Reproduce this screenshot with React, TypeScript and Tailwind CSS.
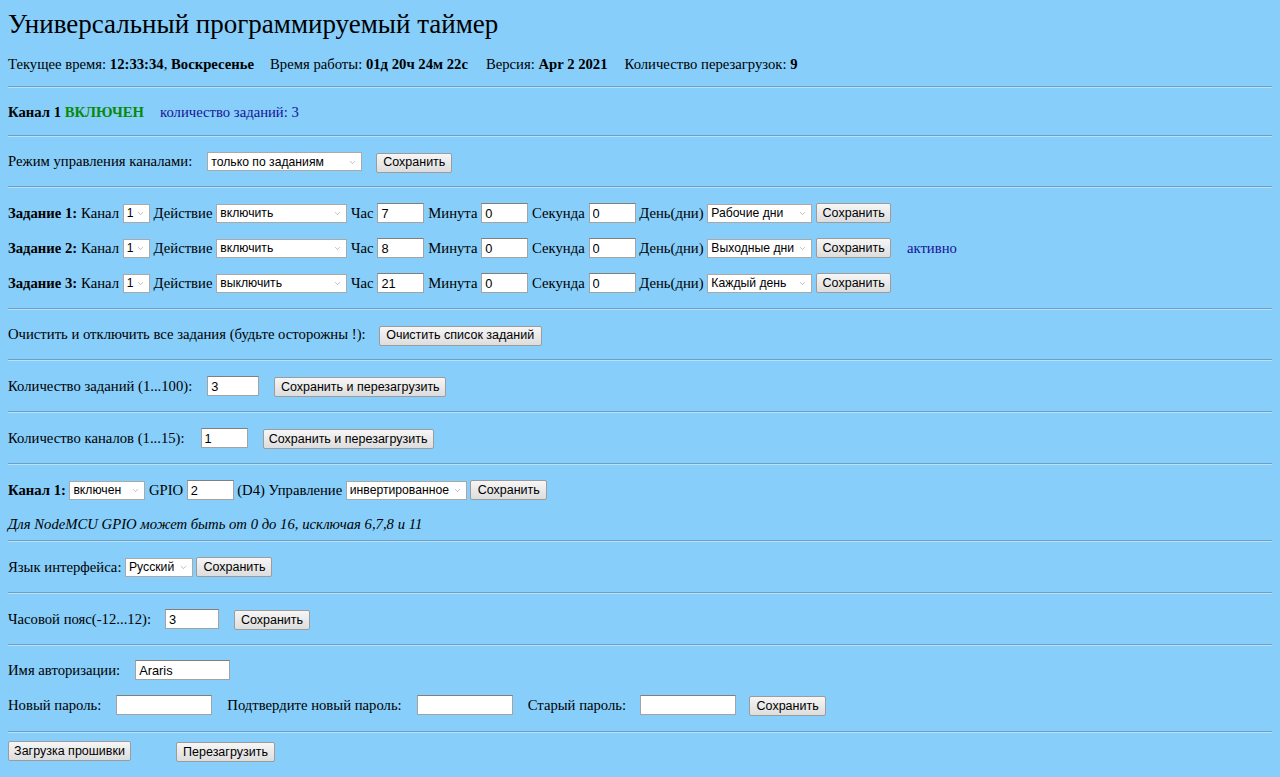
import { ChevronDown } from "lucide-react";

const serif = { fontFamily: '"Liberation Serif", "Times New Roman", serif' };

function Hr() {
  return <div className="h-[2px] border-t border-b border-t-[#6c9fc1] border-b-[#b8e1fb]" />;
}

function Btn({ w, children }: { w: number; children: string }) {
  return (
    <button
      style={{ width: w }}
      className="h-[20px] shrink-0 rounded-[2px] border border-[#9c9c9c] bg-gradient-to-b from-[#f6f6f6] to-[#dddddd] text-[12.5px] leading-none text-black font-['Liberation_Sans',Arial,sans-serif]"
    >
      {children}
    </button>
  );
}

function Inp({ w, value }: { w: number; value: string }) {
  return (
    <input
      readOnly
      value={value}
      style={{ width: w }}
      className="h-[20px] shrink-0 border border-[#a3a3a3] border-t-[#7f7f7f] bg-white pl-[3px] text-[12.8px] text-black outline-none font-['Liberation_Sans',Arial,sans-serif]"
    />
  );
}

// dropdown drawn as a box so the text sits where the old Windows select put it
function Sel({ w, value }: { w: number; value: string }) {
  return (
    <div
      role="combobox"
      style={{ width: w }}
      className="flex h-[19px] shrink-0 items-center justify-between gap-[2px] border border-[#a9a9a9] bg-white pt-[1px] pl-[3px] pr-[4px] text-[12.2px] leading-none whitespace-nowrap text-black font-['Liberation_Sans',Arial,sans-serif]"
    >
      <span>{value}</span>
      <ChevronDown size={9} strokeWidth={1.5} className="shrink-0 text-[#8f8f8f]" />
    </div>
  );
}

const tasks = [
  { n: 1, action: "включить", h: "7", day: "Рабочие дни", active: false },
  { n: 2, action: "включить", h: "8", day: "Выходные дни", active: true },
  { n: 3, action: "выключить", h: "21", day: "Каждый день", active: false },
];

export default function App() {
  return (
    <div style={serif} className="min-h-[777px] bg-[#87cefa] px-[8px] text-[14.7px] text-black">
      <div className="flex h-[48px] items-center">
        <h1 className="text-[27px] font-normal leading-none">Универсальный программируемый таймер</h1>
      </div>
      <div className="flex h-[31px] items-center whitespace-pre pt-[1px]">
        <span>
          Текущее время: <b>12:33:34</b>, <b>Воскресенье</b>
        </span>
        <span className="ml-[16px]">
          Время работы: <b>01д 20ч 24м 22с</b>
        </span>
        <span className="ml-[18px]">
          Версия: <b>Apr 2 2021</b>
        </span>
        <span className="ml-[17px]">
          Количество перезагрузок: <b>9</b>
        </span>
      </div>
      <div className="h-[7px]" />
      <Hr />

      <div className="flex h-[47px] items-center whitespace-pre pt-[1px]">
        <b>Канал 1 </b>
        <b className="text-[#078a07]">ВКЛЮЧЕН</b>
        <span className="ml-[16px] text-[#141496]">количество заданий: 3</span>
      </div>
      <Hr />

      <div className="flex h-[49px] items-center">
        <span>Режим управления каналами:</span>
        <div className="ml-[15px]">
          <Sel w={155} value="только по заданиям" />
        </div>
        <div className="ml-[14px]">
          <Btn w={76}>Сохранить</Btn>
        </div>
      </div>
      <Hr />

      <div className="flex flex-col gap-[15px] py-[15px]">
        {tasks.map((t) => (
          <div key={t.n} className="flex h-[20px] items-center gap-[3.8px]">
            <b>Задание {t.n}:</b>
            <span>Канал</span>
            <Sel w={27} value="1" />
            <span>Действие</span>
            <Sel w={131} value={t.action} />
            <span>Час</span>
            <Inp w={47} value={t.h} />
            <span>Минута</span>
            <Inp w={47} value="0" />
            <span>Секунда</span>
            <Inp w={47} value="0" />
            <span>День(дни)</span>
            <Sel w={105} value={t.day} />
            <Btn w={75}>Сохранить</Btn>
            {t.active && <span className="ml-[12px] text-[#141496]">активно</span>}
          </div>
        ))}
      </div>
      <Hr />

      <div className="flex h-[49px] items-center">
        <span>Очистить и отключить все задания (будьте осторожны !):</span>
        <div className="ml-[13px]">
          <Btn w={163}>Очистить список заданий</Btn>
        </div>
      </div>
      <Hr />

      <div className="flex h-[50px] items-center">
        <span>Количество заданий (1...100):</span>
        <div className="ml-[15px]">
          <Inp w={52} value="3" />
        </div>
        <div className="ml-[15px]">
          <Btn w={172}>Сохранить и перезагрузить</Btn>
        </div>
      </div>
      <Hr />

      <div className="flex h-[50px] items-center">
        <span>Количество каналов (1...15):</span>
        <div className="ml-[16px]">
          <Inp w={47} value="1" />
        </div>
        <div className="ml-[15px]">
          <Btn w={171}>Сохранить и перезагрузить</Btn>
        </div>
      </div>
      <Hr />

      <div className="flex h-[75px] flex-col pt-[15px]">
        <div className="flex h-[20px] items-center gap-[3.5px]">
          <b>Канал 1:</b>
          <Sel w={76} value="включен" />
          <span>GPIO</span>
          <Inp w={47} value="2" />
          <span>(D4) Управление</span>
          <Sel w={121} value="инвертированное" />
          <Btn w={77}>Сохранить</Btn>
        </div>
        <div className="mt-[14px] italic leading-[20px]">
          Для NodeMCU GPIO может быть от 0 до 16, исключая 6,7,8 и 11
        </div>
      </div>
      <Hr />

      <div className="flex h-[50px] items-center gap-[3.5px]">
        <span>Язык интерфейса:</span>
        <Sel w={68} value="Русский" />
        <Btn w={76}>Сохранить</Btn>
      </div>
      <Hr />

      <div className="flex h-[50px] items-center">
        <span>Часовой пояс(-12...12):</span>
        <div className="ml-[14px]">
          <Inp w={54} value="3" />
        </div>
        <div className="ml-[15px]">
          <Btn w={76}>Сохранить</Btn>
        </div>
      </div>
      <Hr />

      <div className="flex h-[85px] flex-col pt-[14px]">
        <div className="flex h-[20px] items-center">
          <span>Имя авторизации:</span>
          <div className="ml-[15px]">
            <Inp w={95} value="Araris" />
          </div>
        </div>
        <div className="mt-[15px] flex h-[20px] items-center">
          <span>Новый пароль:</span>
          <div className="ml-[15px]">
            <Inp w={96} value="" />
          </div>
          <span className="ml-[15px]">Подтвердите новый пароль:</span>
          <div className="ml-[15px]">
            <Inp w={96} value="" />
          </div>
          <span className="ml-[15px]">Старый пароль:</span>
          <div className="ml-[14px]">
            <Inp w={96} value="" />
          </div>
          <div className="ml-[13px]">
            <Btn w={77}>Сохранить</Btn>
          </div>
        </div>
      </div>
      <Hr />

      <div className="flex items-center pt-[7px] pb-[16px]">
        <Btn w={123}>Загрузка прошивки</Btn>
        <div className="ml-[45px]">
          <Btn w={99}>Перезагрузить</Btn>
        </div>
      </div>
    </div>
  );
}
